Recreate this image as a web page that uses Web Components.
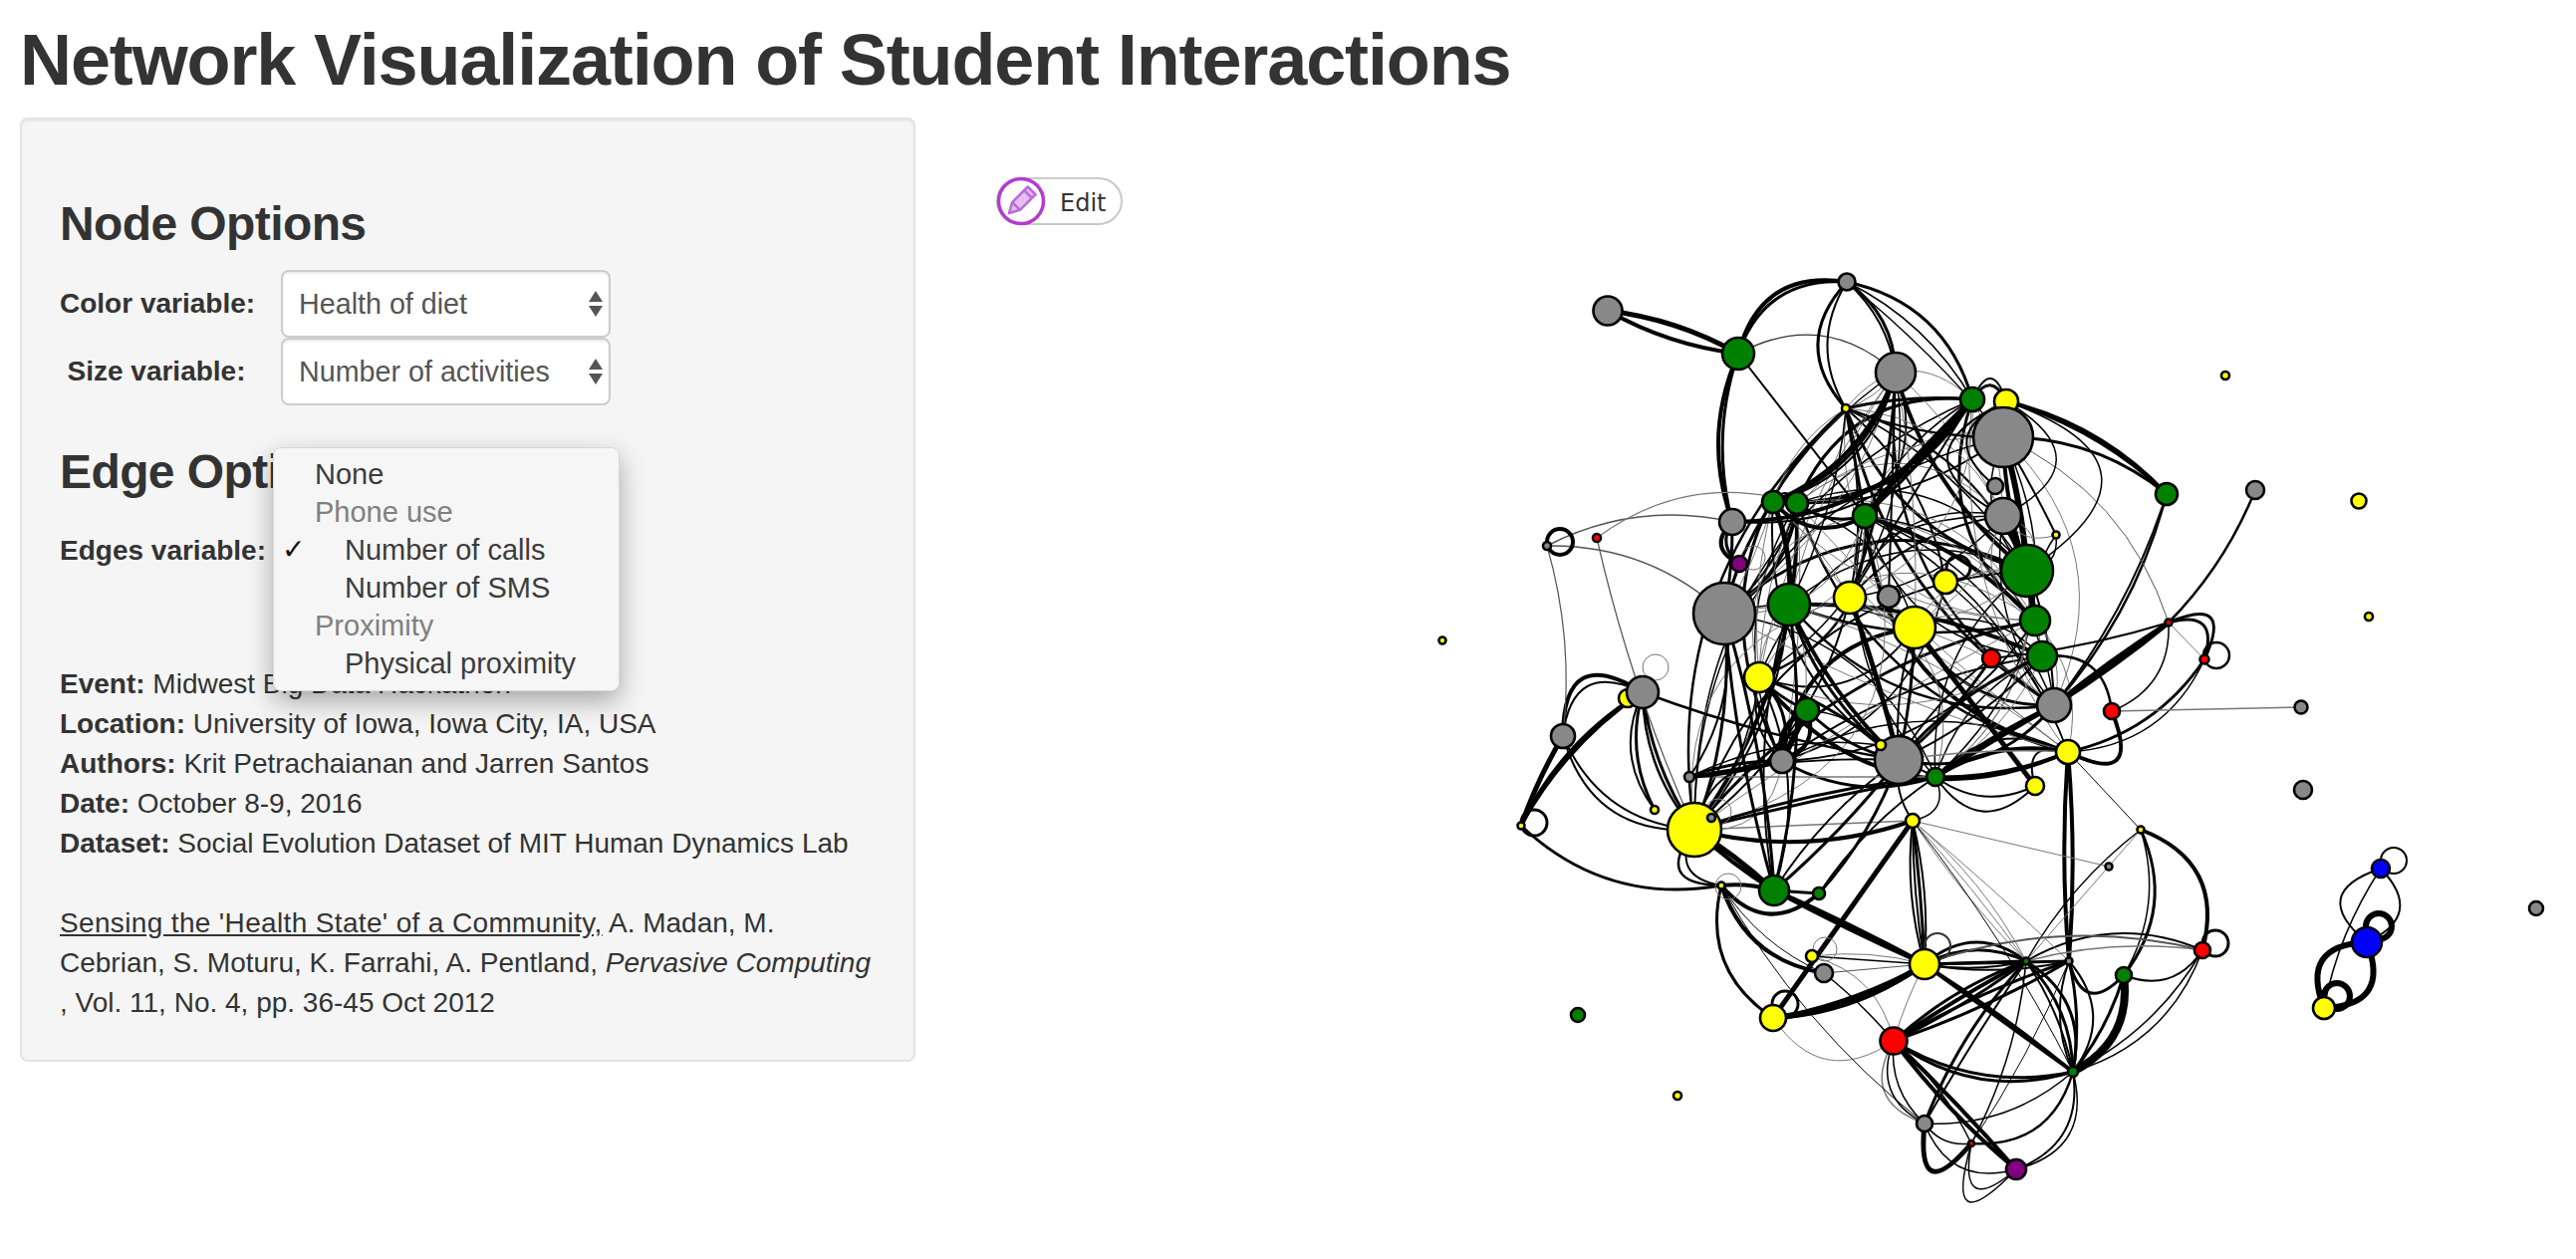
<!DOCTYPE html>
<html lang="en">
<head>
<meta charset="utf-8">
<title>Network Visualization of Student Interactions</title>
<style>
    html, body {
        margin: 0;
        background: #fff;
        overflow: hidden;
    }
    body {
        font-family: 'Liberation Sans', Arial, sans-serif;
        color: #333;
    }
</style>
</head>
<body>

<app-page>
    <span slot="title">Network Visualization of Student Interactions</span>

    <side-panel slot="side">
        <panel-heading>Node Options</panel-heading>
        <select-row value="Health of diet">Color variable:</select-row>
        <select-row value="Number of activities">Size variable:</select-row>

        <panel-heading style="margin-bottom: 19px">Edge Options</panel-heading>
        <select-row value="Number of calls" style="--label-w: 204px; --label-gap: 18px; margin-bottom: 80px">Edges variable:</select-row>

        <info-block>
            <b>Event:</b> Midwest Big Data Hackathon<br>
            <b>Location:</b> University of Iowa, Iowa City, IA, USA<br>
            <b>Authors:</b> Krit Petrachaianan and Jarren Santos<br>
            <b>Date:</b> October 8-9, 2016<br>
            <b>Dataset:</b> Social Evolution Dataset of MIT Human Dynamics Lab<br>
            <br>
            <u style="letter-spacing: .35px">Sensing the 'Health State' of a Community,</u> A. Madan, M.<br>
            Cebrian, S. Moturu, K. Farrahi, A. Pentland, <i>Pervasive Computing</i><br>
            , Vol. 11, No. 4, pp. 36-45 Oct 2012
        </info-block>

        <option-menu></option-menu>
    </side-panel>

    <edit-pill slot="main">Edit</edit-pill>
    <network-plot slot="main"></network-plot>
</app-page>

<script>
// page shell: title on top, then the panel and the plot side by side
class AppPage extends HTMLElement {
    constructor() {
        super();
        this.attachShadow({ mode: 'open' });
        this.shadowRoot.innerHTML = `
<style>
    :host {
        display: block;
        padding: 21px 0 0 20px;
    }
    h1 {
        font-size: 72px;
        line-height: 79px;
        font-weight: 700;
        letter-spacing: -1.12px;
        margin: 0 0 18px 0;
        color: #333;
        white-space: nowrap;
    }
    .row {
        display: flex;
        align-items: flex-start;
    }
    .main {
        flex: 1;
        min-width: 0;
        margin-left: 41px;
        padding-top: 60px;
    }
</style>
<h1><slot name="title"></slot></h1>
<div class="row">
    <slot name="side"></slot>
    <div class="main"><slot name="main"></slot></div>
</div>`;
    }
}

class SidePanel extends HTMLElement {
    constructor() {
        super();
        this.attachShadow({ mode: 'open' });
        this.shadowRoot.innerHTML = `
<style>
    :host {
        display: block;
        position: relative;
        box-sizing: border-box;
        width: 899px;
        height: 948px;
        padding: 38px;
        background: #f5f5f5;
        border: 2px solid #e3e3e3;
        border-radius: 8px;
        box-shadow: inset 0 2px 2px rgba(0, 0, 0, .05);
    }
</style>
<slot></slot>`;
    }
}

class PanelHeading extends HTMLElement {
    constructor() {
        super();
        this.attachShadow({ mode: 'open' });
        this.shadowRoot.innerHTML = `
<style>
    :host {
        display: block;
        font-size: 48px;
        line-height: 53px;
        font-weight: 700;
        letter-spacing: -.6px;
        margin: 40px 0 20px 0;
        color: #333;
    }
</style>
<slot></slot>`;
    }
}

class SelectRow extends HTMLElement {
    constructor() {
        super();
        this.attachShadow({ mode: 'open' });
        this.shadowRoot.innerHTML = `
<style>
    :host {
        display: flex;
        align-items: center;
        font-size: 28px;
    }
    .label {
        width: var(--label-w, 194px);
        margin-right: var(--label-gap, 28px);
        flex: none;
        text-align: center;
        font-weight: 700;
        white-space: nowrap;
        color: #333;
    }
    .box {
        box-sizing: border-box;
        width: 331px;
        height: 68px;
        display: flex;
        align-items: center;
        justify-content: space-between;
        padding: 0 6px 0 16px;
        background: #fff;
        border: 2px solid #ccc;
        border-radius: 8px;
        color: #555;
        font-size: 28.7px;
        box-shadow: inset 0 2px 2px rgba(0, 0, 0, .075);
    }
</style>
<div class="label"><slot></slot></div>
<div class="box">
    <span class="value"></span>
    <svg width="14" height="26" viewBox="0 0 14 26"><path d="M7 0L14 11H0zM7 26L0 15H14z" fill="#555"/></svg>
</div>`;
    }

    connectedCallback() {
        this.shadowRoot.querySelector('.value').textContent = this.getAttribute('value');
    }
}

class InfoBlock extends HTMLElement {
    constructor() {
        super();
        this.attachShadow({ mode: 'open' });
        this.shadowRoot.innerHTML = `
<style>
    :host {
        display: block;
        font-size: 28px;
        line-height: 40px;
        white-space: nowrap;
        color: #333;
    }
</style>
<slot></slot>`;
    }
}

// the open dropdown that lies over the panel
class OptionMenu extends HTMLElement {
    constructor() {
        super();
        this.attachShadow({ mode: 'open' });
        this.shadowRoot.innerHTML = `
<style>
    :host {
        display: block;
        position: absolute;
        left: 252px;
        top: 329px;
        box-sizing: border-box;
        width: 348px;
        height: 245px;
        padding: 7px 0 0 0;
        background: #f6f6f6;
        border: 1px solid #d8d8d8;
        border-radius: 8px;
        box-shadow: 0 10px 26px rgba(0, 0, 0, .32);
        font-size: 29px;
        color: #3c3c3c;
    }
    div {
        height: 38px;
        line-height: 38px;
        padding-left: 41px;
        position: relative;
        white-space: nowrap;
    }
    .group { color: #808080; }
    .sub { padding-left: 71px; }
    .tick {
        position: absolute;
        left: 8px;
        top: 0;
        font: 28px 'DejaVu Sans', sans-serif;
        line-height: 38px;
        color: #111;
    }
</style>
<div>None</div>
<div class="group">Phone use</div>
<div class="sub"><span class="tick">&#10003;</span>Number of calls</div>
<div class="sub">Number of SMS</div>
<div class="group">Proximity</div>
<div class="sub">Physical proximity</div>`;
    }
}

class EditPill extends HTMLElement {
    constructor() {
        super();
        this.attachShadow({ mode: 'open' });
        this.shadowRoot.innerHTML = `
<style>
    :host {
        display: flex;
        align-items: center;
        box-sizing: border-box;
        width: 127px;
        height: 48px;
        margin-left: 40px;
        border: 2px solid #c9c9c9;
        border-radius: 24px;
        font: 24px 'DejaVu Sans', sans-serif;
        color: #333;
    }
    svg {
        flex: none;
        margin: -2px 14px -2px -2px;
    }
    span {
        position: relative;
        top: 2px;
    }
</style>
<svg width="50" height="50" viewBox="0 0 50 50">
    <circle cx="25" cy="25" r="22.5" fill="#fff" stroke="#b23ccf" stroke-width="3.5"/>
    <g transform="rotate(45 25 25)" fill="#e3bff0" stroke="#bb6cda" stroke-width="2.6" stroke-linejoin="round">
        <path d="M19.5 10V32L25 42L30.5 32V10Z"/>
        <path d="M19.5 15H30.5M19.5 32H30.5" fill="none"/>
    </g>
</svg>
<span><slot></slot></span>`;
    }
}

// id, colour, x, y, radius in page pixels, painted in this order
const NODES = [
    ['g1','#888',1614,312,14.5], ['n1','#008000',1745,355,16], ['g2','#888',1854,283,8.5],
    ['g3','#888',1903,374,20], ['y1','#ff0',1853,410,4], ['n2','#008000',1980,401,12],
    ['y2','#ff0',2014,403,12], ['g4','#888',2011,439,30], ['g5','#888',2003,488,8],
    ['g6','#888',2011,518,18], ['y3','#ff0',2064,537,3.5], ['n3','#008000',2035,573,26],
    ['n4','#008000',2043,623,15], ['n5','#008000',2175,496,11], ['g7','#888',2264,492,9],
    ['y4','#ff0',2234,377,4], ['y5','#ff0',2368,503,7.5], ['y6','#ff0',2378,619,4],
    ['r1','#d00',2177,625,3.5], ['n6','#008000',1780,504,11], ['n7','#008000',1804,505,11],
    ['n8','#008000',1872,518,12], ['g8','#888',1739,524,13], ['g9','#888',1553,548,4],
    ['r2','#f00',1603,540,4], ['p1','#800080',1746,566,8], ['g10','#888',1731,616,31],
    ['n9','#008000',1796,607,21], ['y7','#ff0',1857,600,16], ['g11','#888',1896,599,11],
    ['y8','#ff0',1953,584,12], ['y9','#ff0',1922,630,21], ['y10','#ff0',1766,680,15],
    ['y11','#ff0',1634,701,9], ['g12','#888',1649,695,16], ['g13','#888',1569,739,12],
    ['n10','#008000',1814,713,12], ['g14','#888',1789,764,12], ['g15','#888',1696,780,5],
    ['g16','#888',1906,763,24], ['y12','#ff0',1888,748,5], ['n11','#008000',1943,780,9],
    ['y13','#ff0',1661,813,4], ['y14','#ff0',1701,833,27], ['g17','#888',1718,821,4],
    ['y15','#ff0',1527,829,3.5], ['y16','#ff0',1920,824,7], ['r3','#f00',1999,661,9],
    ['n12','#008000',2050,659,15], ['g18','#888',2062,708,17], ['y17','#ff0',2076,755,12],
    ['y18','#ff0',2043,789,9], ['n13','#008000',1781,894,15], ['n14','#008000',1826,897,6],
    ['y19','#ff0',1728,889,3.5], ['y20','#ff0',1932,968,15], ['y21','#ff0',1819,960,6],
    ['g19','#888',1831,977,9], ['y22','#ff0',1780,1022,13], ['r4','#f00',1901,1045,13.5],
    ['n15','#008000',1584,1019,7], ['y23','#ff0',1684,1100,4], ['n16','#008000',2034,965,3.5],
    ['g20','#888',2077,965,3.5], ['n17','#008000',2132,979,8], ['r5','#f00',2211,954,8],
    ['n18','#008000',2081,1076,5], ['g21','#888',1932,1128,8], ['r6','#f00',1979,1148,3],
    ['p2','#800080',2024,1174,10], ['r7','#f00',2213,662,4.5], ['r8','#f00',2120,714,8],
    ['g22','#888',2310,710,6.5], ['g23','#888',2312,793,9], ['y24','#ff0',2149,833,3.5],
    ['g24','#888',2117,870,3.5], ['b1','#00f',2390,872,9], ['b2','#00f',2376,946,15],
    ['y25','#ff0',2333,1012,11], ['g25','#888',2546,912,7], ['y26','#ff0',1448,643,3.5]
];

// self loops: x, y, radius, width, colour
const RINGS = [
    [1566,544,13,4,'#000'], [1540,826,13,3,'#000'], [2225,658,13,2.5,'#000'],
    [2224,947,13,3,'#000'], [2403,864,13,2,'#000'], [2388,930,13,6,'#000'],
    [2346,1000,13,6,'#000'], [1792,1008,13,3,'#000'], [1945,950,13,2,'#333'],
    [1832,953,12,1,'#777'], [1966,570,12,3,'#000'], [1662,670,13,1,'#777'],
    [1725,815,13,1,'#777'], [1735,890,13,1,'#777'], [1760,560,12,1,'#777']
];

// the edges that can be read one by one: from, to, width, bend, colour
const EDGES = [
    ['g1','n1',5,.1], ['g1','n1',4,-.1], ['n1','g2',4,.45], ['n1','g2',3,.38],
    ['n1','g8',4,-.2], ['n1','g8',3,-.15], ['n1','n8',2,0], ['n1','g3',1.2,.35,'#333'],
    ['g2','y1',3,-.45], ['g2','y1',2,-.3], ['g2','g3',3,.25], ['g2','g3',2,.18],
    ['g2','n2',3,.3], ['g2','n2',1.5,.15], ['g2','g4',1.5,.05],
    ['y2','n5',4,.15], ['y2','n5',3,.12], ['g4','n5',3,.18],
    ['n5','g18',2.5,.12], ['n5','g18',2,.09], ['g7','r1',2.5,.1], ['g4','r1',1,.22,'#555'],
    ['r1','r7',3,1.3], ['r1','r7',3,.9], ['r1','r7',1,0,'#777'],
    ['r1','g18',5,.03], ['r1','g18',4,-.03], ['r1','r8',1.5,.35], ['r1','r3',2,.05],
    ['r7','y17',3,.2], ['r7','y17',1.5,.3], ['r8','g22',1.5,0,'#777'],
    ['y17','r8',4,-1.3], ['n12','r8',2.5,.5], ['y17','g20',4,.04], ['y17','g20',4,-.04],
    ['y17','y24',1,0], ['y24','r5',4,.45], ['y24','n17',3,.3], ['y24','n17',1.5,.22],
    ['y24','n16',1.5,-.1], ['y24','n16',1,0,'#777'], ['g24','y16',1,0,'#777'],
    ['n16','r5',2,.25], ['n16','r5',1.5,.1,'#777'], ['n17','r5',2,-.4],
    ['n17','n18',8,.35], ['n17','n18',3,.1], ['r5','n18',1.5,.15], ['r5','n18',1.5,.25],
    ['n17','g20',3,.9], ['n16','y20',3,-.4], ['n16','y20',3,-.25], ['n16','y20',3,0], ['n16','y20',2,.1],
    ['g20','y20',3,0], ['g20','y20',2,.1], ['y20','r5',2,.15,'#555'],
    ['r4','n16',4,.03], ['r4','n16',3,.1], ['r4','n16',3,-.05], ['r4','g20',3,.05], ['r4','g20',3,-.05],
    ['r4','n18',3,-.2], ['r4','n18',3,-.25], ['y20','n18',4,0], ['y20','n18',3,.03],
    ['r4','p2',4,.02], ['r4','p2',4,-.06], ['r4','g21',1.5,-.45], ['r4','g21',1.5,-.25], ['r4','g21',1.5,-.6,'#777'],
    ['r4','r6',1.5,.1], ['g21','r6',5,-1.6], ['g21','p2',1.5,-.45], ['g21','r6',1.5,-.3],
    ['r6','p2',1.5,-2], ['r6','p2',1.5,-1.4], ['n18','p2',1.5,.5], ['n18','p2',2,.4],
    ['n18','r6',2.5,.4], ['n18','g21',1.5,.2], ['n16','n18',3,.2], ['n16','n18',3,.35], ['n16','n18',2,.1],
    ['g20','n18',3,.1], ['g20','n18',2,.4], ['g20','n18',2,-.2], ['n16','g21',3,-.1], ['n16','g21',2,-.02],
    ['n16','r6',1.5,.1], ['g20','r6',1,.05], ['y22','r4',1,-.5,'#777'], ['y21','r4',1,.3,'#777'], ['y20','r4',1,-.05,'#777'],
    ['y20','y21',1.5,0], ['y20','y21',1,-.1,'#777'], ['g19','y20',1,0,'#555'],
    ['y22','y20',6,-.12], ['y22','y20',4,-.15], ['y22','y20',3,-.08],
    ['y19','y22',3,-.35], ['y19','g19',4,-.3], ['y19','g19',1,-.15], ['g19','r4',1.5,.05],
    ['n13','y20',5,.02], ['n13','y20',4,-.02], ['y16','y22',5,0],
    ['y16','y20',3,.02], ['y16','y20',2,-.04], ['y16','y20',2,.08], ['y16','y20',2,-.1],
    ['y16','n16',1,.1,'#777'], ['y16','n16',1,.03,'#777'], ['y16','n16',1,-.05,'#777'], ['y16','g20',1,.02,'#777'],
    ['y16','n18',1,.05], ['y19','n13',4,.1], ['y19','g21',1,-.1],
    ['y15','g13',5,.05], ['y15','g12',4,.15], ['y15','g12',3,.12], ['g13','g12',4,.9], ['g13','g12',2,.7],
    ['y15','y19',3,-.25], ['g13','y14',2,-.3], ['g13','y14',2,-.4],
    ['g12','y13',3,-.2], ['g12','y13',2,-.3], ['g12','y14',3,-.12], ['g12','y14',2.5,-.18],
    ['y14','y16',4,-.15], ['y14','n11',3,.02], ['y14','n11',3,.06], ['y14','n13',5,.05], ['y14','n13',4,-.05],
    ['y14','y19',2.5,-1], ['y14','y19',2,-.7], ['y14','y16',1.5,0,'#777'],
    ['y19','n14',4,-.5], ['n13','n14',3,0], ['n13','g16',2,.1], ['n13','g16',3,-.05], ['n14','g16',3,-.1], ['n14','n11',2,.1],
    ['g15','n11',1.5,0,'#777'], ['g15','g14',4,-.05], ['g15','g14',3,.1],
    ['g14','n10',6,0], ['g14','n10',5,.4], ['g14','n10',4,-.5], ['g12','g16',2.5,-.05],
    ['n11','g18',5,.02], ['n11','g18',4,.05], ['y9','y18',5,0],
    ['n11','y17',3,-.1], ['n11','y18',2,-.3], ['n11','y18',2,-.6], ['y17','y18',2,-.9],
    ['g9','g10',1.5,.2,'#555'], ['g9','g8',1.5,.18,'#555'], ['r2','n7',1.2,.25,'#777'],
    ['r2','y14',1.2,-.05,'#555'], ['g9','g13',1.2,.1,'#555'], ['g8','p1',4,-.7], ['g8','p1',3,-.45],
    ['n6','n7',2,.8], ['g8','g10',3,.05], ['n6','n9',5,.12], ['n6','g10',3,-.1], ['n6','n8',4,-.4], ['n7','n8',3,-.25],
    ['y1','n8',3,0], ['y1','g4',2,-.1], ['y1','n2',3,.08], ['n6','g3',4,-.22], ['n6','g3',3,-.26], ['n6','g3',2,-.3],
    ['g8','n2',4,-.25], ['g8','n2',2,-.3], ['n8','n2',5,.03], ['n8','n2',3,-.05], ['y1','n9',1.5,.1],
    ['n2','y7',2,0], ['g3','g11',2,0], ['g3','y7',3,.08],
    ['g6','n3',6,.02], ['g4','n3',6,.05], ['g4','n3',4,-.08], ['n3','n4',6,0], ['g4','y3',2,.02],
    ['y3','n4',1.5,-.2], ['y3','g6',1,.4,'#777'], ['y3','n3',1.5,.5], ['y2','g6',2,-1], ['y2','g5',2,-.8],
    ['y2','g6',1.5,.9], ['y2','n3',1.5,1], ['n2','y2',3,.9], ['n2','y2',2,1.3], ['g6','n3',1,.6,'#777'],
    // vertical bundles below the big grey and fans round the lower grey
    ['g10','n13',3,.06], ['g10','n13',3,-.05], ['g10','g15',2,.2], ['g10','y14',3,.12], ['n9','n13',3,.1], ['n9','n13',2,-.12],
    ['y10','n13',2,.2], ['y10','n10',3,-.1], ['y10','g14',3,.3], ['y10','g14',2,-.3],
    ['y7','g16',5,.03], ['y9','g16',3,.05], ['y9','g16',2,-.1], ['n9','g16',4,-.1], ['n9','g16',3,-.16],
    ['r3','g16',3,.08], ['r3','g16',2,-.1], ['n12','g16',3,-.12], ['n12','g16',2,.1],
    ['y10','g16',3,.1], ['n10','g16',3,-.15], ['n10','y12',1.5,.2], ['g18','g16',3,.3],
    ['n11','y17',4,.2], ['g16','y17',1.5,.05,'#777'], ['g15','g16',2,.06], ['g15','y12',1.5,.15],
    ['y16','g16',2,.2], ['y16','n11',1.5,-.6], ['y14','g14',2,.4],
    // blue island
    ['b1','b2',2,.7], ['b1','b2',2,-.9], ['b1','y25',1.5,-.1], ['b2','y25',6,.7], ['b2','y25',6,-.7]
];

// small seeded generator, the middle of the tangle is too dense to copy edge by edge
function seeded(s) {
    return () => {
        s = (s * 1664525 + 1013904223) % 4294967296;
        return s / 4294967296;
    };
}

function tangle(at) {
    const rnd = seeded(20161008);
    const ids = ['g3','n2','g4','g6','n3','n4','n6','n7','n8','g10','n9','y7','y8','y9','y10','g14','n12','g18','y17','n11','y14','y1'];
    const pick = () => ids[Math.floor(rnd() * ids.length)];
    const out = [];
    const widths = [1.5, 1.5, 1.5, 2, 2, 2.5, 3, 4];
    for (let i = 0; i < 130 && out.length < 70; i++) {
        const a = pick(), b = pick();
        if (Math.hypot(at[a][2] - at[b][2], at[a][3] - at[b][3]) < 130) continue;
        // always some bow on them, straight ones read as a grid
        const bend = (rnd() < .5 ? -1 : 1) * (.12 + rnd() * .28);
        out.push([a, b, widths[Math.floor(rnd() * widths.length)], bend]);
    }
    for (let i = 0; i < 60; i++) {
        const a = pick(), b = pick();
        if (a == b) continue;
        out.push([a, b, 1, (rnd() - .5) * 1.1, '#777']);
    }
    return out;
}

class NetworkPlot extends HTMLElement {
    constructor() {
        super();
        this.attachShadow({ mode: 'open' });
        const at = {};
        NODES.forEach(n => { at[n[0]] = n; });

        let edges = '';
        tangle(at).concat(EDGES).forEach(e => {
            const a = at[e[0]], b = at[e[1]];
            const dx = b[2] - a[2], dy = b[3] - a[3];
            const cx = (a[2] + b[2]) / 2 + dy * e[3];
            const cy = (a[3] + b[3]) / 2 - dx * e[3];
            edges += `<path d="M${a[2]} ${a[3]}Q${cx.toFixed(1)} ${cy.toFixed(1)} ${b[2]} ${b[3]}" stroke="${e[4] || '#000'}" stroke-width="${e[2]}"/>`;
        });

        const rings = RINGS.map(r => `<circle cx="${r[0]}" cy="${r[1]}" r="${r[2]}" stroke="${r[4]}" stroke-width="${r[3]}"/>`).join('');
        const nodes = NODES.map(n => `<circle cx="${n[2]}" cy="${n[3]}" r="${n[4]}" fill="${n[1]}"/>`).join('');

        this.shadowRoot.innerHTML = `
<style>
    :host {
        display: block;
        margin-top: 14px;
    }
    svg {
        display: block;
        width: 1626px;
        height: 1000px;
    }
</style>
<svg viewBox="960 240 1626 1000">
    <g fill="none">${edges}${rings}</g>
    <g stroke="#000" stroke-width="2.6">${nodes}</g>
</svg>`;
    }
}

window.customElements.define('app-page', AppPage);
window.customElements.define('side-panel', SidePanel);
window.customElements.define('panel-heading', PanelHeading);
window.customElements.define('select-row', SelectRow);
window.customElements.define('info-block', InfoBlock);
window.customElements.define('option-menu', OptionMenu);
window.customElements.define('edit-pill', EditPill);
window.customElements.define('network-plot', NetworkPlot);
</script>
</body>
</html>
